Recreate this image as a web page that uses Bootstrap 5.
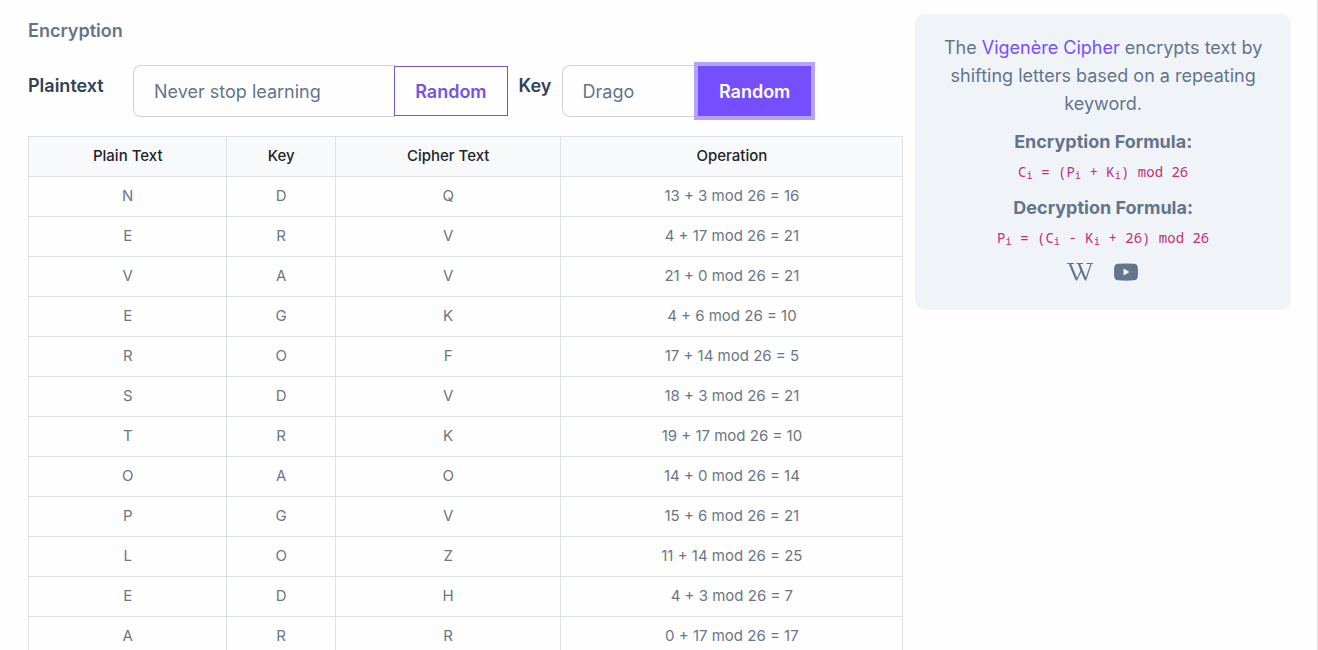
<!DOCTYPE html>
<html lang="en">
<head>
<meta charset="utf-8">
<meta name="viewport" content="width=device-width, initial-scale=1">
<title>Vigenère Cipher</title>
<link href="https://cdn.jsdelivr.net/npm/bootstrap@5.3.0/dist/css/bootstrap.min.css" rel="stylesheet">
<style>
  body { font-family: Inter, "Liberation Sans", sans-serif; font-size: 18px; line-height: 28px; color: #64748b; background: #fefefe; }
  .page-frame { border-right: 1px solid #e2e5e9; padding: 14px 26px 0 28px; min-height: 100vh; }
  .cipher-layout { display: grid; grid-template-columns: 2.33fr 1fr; column-gap: 12px; align-items: start; }
  .section-title { font-size: 18px; line-height: 28px; font-weight: 600; padding-top: 3px; margin-bottom: 20px; }
  .cipher-form { display: grid; grid-template-columns: 94px 3fr 32px 2fr; column-gap: 11px; margin-right: 92px; margin-bottom: 19px; }
  .cipher-form label { font-weight: 600; color: #334155; padding-top: 7px; }
  .cipher-form .form-control { height: 52px; padding: 0 20px; font-size: 18px; color: #64748b; border: 1px solid #ced4da; border-radius: 8px 0 0 8px; border-right: 0; background: #fefefe; }
  .cipher-form .btn { height: 50px; margin-top: 1px; margin-bottom: 1px; padding: 0 20px; font-size: 18px; font-weight: 600; border-radius: 0; }
  .cipher-form .btn-random { color: #7454e8; border: 1px solid #7454d0; background: #fefefe; }
  .cipher-form .btn-random:hover, .cipher-form .btn-random.active { color: #fff; background: #754ffe; border-color: #754ffe; }
  .cipher-form .btn-random.active { box-shadow: 0 0 0 4px #b5a3fb; z-index: 5; }
  .cipher-table { table-layout: fixed; font-size: 15px; line-height: 23px; text-align: center; border-color: #dee2e6; margin: 0; --bs-table-bg: transparent; }
  .cipher-table th, .cipher-table td { padding: 7px 8px 9px; height: 40px; }
  .cipher-table th { font-weight: 500; color: #212529; background: #f8f9fb; }
  .cipher-table td { color: #6b7684; }
  .c-plain { width: 22.7%; } .c-key { width: 12.4%; } .c-cipher { width: 25.8%; }
  .info-panel { background: #f0f4f8; border-radius: 10px; padding: 20px 20px 26px; text-align: center; }
  .info-panel p { margin-bottom: 10px; }
  .info-panel a { color: #754ffe; text-decoration: none; }
  .info-panel a.icon { color: #64748b; }
  .info-panel strong { font-weight: 700; display: block; }
  .info-panel code { font-family: "Noto Sans Mono", "DejaVu Sans Mono", monospace; font-size: 14px; color: #c22f77; display: block; padding-top: 4px; line-height: 24px; }
  .info-panel sub { bottom: -2px; }
  .icon svg { display: block; }
</style>
</head>
<body>
<div class="page-frame">
  <div class="cipher-layout">
    <main>
      <h2 class="section-title">Encryption</h2>
      <form class="cipher-form">
        <label for="plaintext">Plaintext</label>
        <div class="input-group flex-nowrap">
          <input class="form-control" id="plaintext" type="text" value="Never stop learning">
          <button class="btn btn-random" type="button">Random</button>
        </div>
        <label for="key">Key</label>
        <div class="input-group flex-nowrap">
          <input class="form-control" id="key" type="text" value="Drago">
          <button class="btn btn-random active" type="button">Random</button>
        </div>
      </form>
      <table class="table table-bordered cipher-table">
        <thead>
          <tr><th class="c-plain" scope="col">Plain Text</th><th class="c-key" scope="col">Key</th><th class="c-cipher" scope="col">Cipher Text</th><th scope="col">Operation</th></tr>
        </thead>
        <tbody>
          <tr><td>N</td><td>D</td><td>Q</td><td>13 + 3 mod 26 = 16</td></tr>
          <tr><td>E</td><td>R</td><td>V</td><td>4 + 17 mod 26 = 21</td></tr>
          <tr><td>V</td><td>A</td><td>V</td><td>21 + 0 mod 26 = 21</td></tr>
          <tr><td>E</td><td>G</td><td>K</td><td>4 + 6 mod 26 = 10</td></tr>
          <tr><td>R</td><td>O</td><td>F</td><td>17 + 14 mod 26 = 5</td></tr>
          <tr><td>S</td><td>D</td><td>V</td><td>18 + 3 mod 26 = 21</td></tr>
          <tr><td>T</td><td>R</td><td>K</td><td>19 + 17 mod 26 = 10</td></tr>
          <tr><td>O</td><td>A</td><td>O</td><td>14 + 0 mod 26 = 14</td></tr>
          <tr><td>P</td><td>G</td><td>V</td><td>15 + 6 mod 26 = 21</td></tr>
          <tr><td>L</td><td>O</td><td>Z</td><td>11 + 14 mod 26 = 25</td></tr>
          <tr><td>E</td><td>D</td><td>H</td><td>4 + 3 mod 26 = 7</td></tr>
          <tr><td>A</td><td>R</td><td>R</td><td>0 + 17 mod 26 = 17</td></tr>
        </tbody>
      </table>
    </main>
    <aside class="info-panel">
      <p>The <a href="#">Vigenère Cipher</a> encrypts text by shifting letters based on a repeating keyword.</p>
      <p><strong>Encryption Formula:</strong><code>C<sub>i</sub> = (P<sub>i</sub> + K<sub>i</sub>) mod 26</code></p>
      <p><strong>Decryption Formula:</strong><code>P<sub>i</sub> = (C<sub>i</sub> - K<sub>i</sub> + 26) mod 26</code></p>
      <div class="d-flex justify-content-center gap-3">
        <a class="icon" href="#" aria-label="Wikipedia">
          <svg width="30" height="24" viewBox="0 0 30 24" fill="none" stroke="currentColor"><path d="M2 3.500h7M11.500 3.500h6.500M21.500 3.500h6.500"/><path stroke-width="2.200" d="M5 4l6.500 15.500M14 4l6.500 15.500"/><path stroke-width="1.200" d="M11.500 20.500L16.200 10.500M20.500 20.500L26 4"/></svg>
        </a>
        <a class="icon" href="#" aria-label="YouTube">
          <svg width="30" height="24" viewBox="0 0 30 24"><path fill="currentColor" fill-rule="evenodd" d="M7 3.800Q15 3 23 3.800Q26.500 4 26.800 7.500Q27.200 12 26.800 16.500Q26.500 20 23 20.300Q15 21 7 20.300Q3.500 20 3.200 16.500Q2.800 12 3.200 7.500Q3.500 4 7 3.800ZM12.500 8.500v7l6-3.500z"/></svg>
        </a>
      </div>
    </aside>
  </div>
</div>
<script src="https://cdn.jsdelivr.net/npm/bootstrap@5.3.0/dist/js/bootstrap.bundle.min.js"></script>
</body>
</html>
